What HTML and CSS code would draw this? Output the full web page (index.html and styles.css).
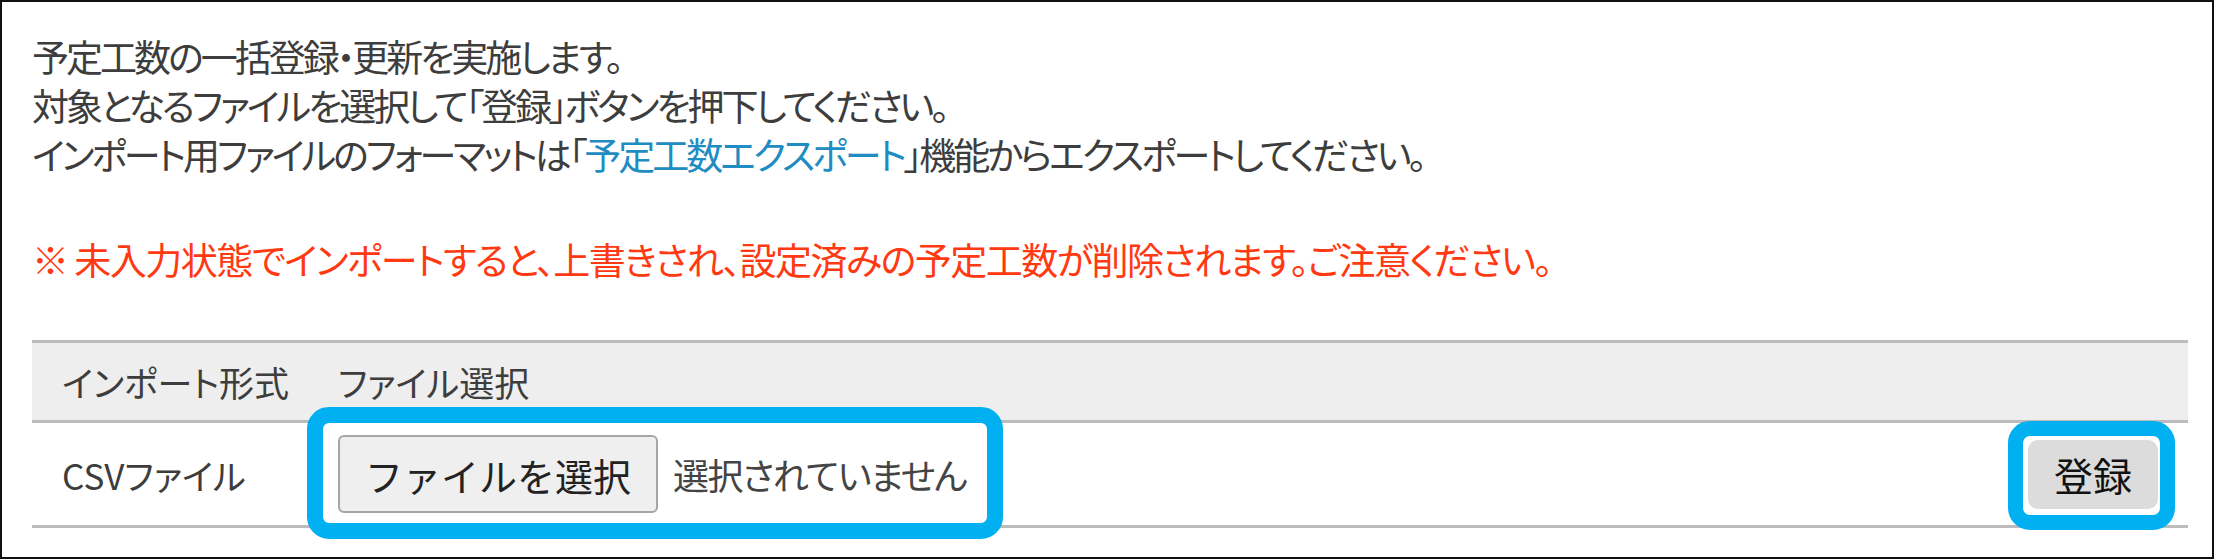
FILE: index.html
```html
<!DOCTYPE html>
<html lang="ja">
<head>
    <meta charset="UTF-8">
    <meta name="viewport" content="width=device-width, initial-scale=1.0">
    <title>予定工数インポート</title>
    <link rel="stylesheet" href="styles.css">
</head>
<body>
    <div class="page">
        <div class="intro">
            <p>予定工数の一括登録・更新を実施します。</p>
            <p>対象となるファイルを選択して「登録」ボタンを押下してください。</p>
            <p>インポート用ファイルのフォーマットは「<a href="#" class="link">予定工数エクスポート</a>」機能からエクスポートしてください。</p>
            <p class="warning">※ 未入力状態でインポートすると、上書きされ、設定済みの予定工数が削除されます。ご注意ください。</p>
        </div>

        <table class="import-table">
            <thead>
                <tr>
                    <th class="col-type">インポート形式</th>
                    <th>ファイル選択</th>
                    <th></th>
                </tr>
            </thead>
            <tbody>
                <tr>
                    <td class="col-type">CSVファイル</td>
                    <td>
                        <span class="file-field mark">
                            <button type="button" class="file-btn">ファイルを選択</button>
                            <span class="file-name">選択されていません</span>
                        </span>
                    </td>
                    <td class="col-action">
                        <span class="submit-wrap mark">
                            <button type="button" class="submit-btn">登録</button>
                        </span>
                    </td>
                </tr>
            </tbody>
        </table>
    </div>
</body>
</html>
```

FILE: styles.css
```css
body {
    margin: 0;
    background-color: #fff;
    font-family: "Noto Sans CJK JP", sans-serif;
    color: #3d3d3d;
}

.page {
    box-sizing: border-box;
    width: 2214px;
    height: 559px;
    border: 2px solid #111;
    padding: 30px 24px 0 30px;
}

.intro p {
    margin: 0;
    font-size: 37px;
    line-height: 49px;
    letter-spacing: -3px;
    font-feature-settings: "palt";
    white-space: nowrap;
}

.link {
    color: #1f8cc2;
    text-decoration: none;
}

.intro .warning {
    margin-top: 56px;
    letter-spacing: -1.5px;
    color: #ff3a12;
}

.import-table {
    width: 100%;
    margin-top: 56px;
    border-collapse: collapse;
    font-size: 35px;
    font-feature-settings: "palt";
}

.import-table th {
    height: 77px;
    padding: 0 0 0 30px;
    background-color: #eeeeee;
    border-top: 3px solid #bcbcbc;
    border-bottom: 3px solid #bcbcbc;
    font-weight: normal;
    text-align: left;
}

.import-table td {
    height: 102px;
    padding: 0 0 0 30px;
    border-bottom: 3px solid #bcbcbc;
    vertical-align: middle;
}

.import-table .col-type {
    width: 246px;
}

.import-table .col-action {
    text-align: right;
    padding-right: 30px;
}

.mark {
    position: relative;
}

/* blue highlight rings */
.mark::after {
    content: "";
    position: absolute;
    border: 16px solid #00b0f0;
    border-radius: 22px;
    pointer-events: none;
}

.file-field {
    display: inline-flex;
    align-items: center;
    gap: 15px;
    vertical-align: middle;
}

.file-field::after {
    inset: -28px -37px -26px -31px;
}

.file-btn {
    box-sizing: border-box;
    height: 78px;
    padding: 0 25px;
    background-color: #efefef;
    border: 2px solid #a6a6a6;
    border-radius: 6px;
    font-family: "Noto Sans CJK JP", sans-serif;
    font-size: 38px;
    color: #222;
}

.file-name {
    font-size: 36px;
    letter-spacing: -1.5px;
    color: #444;
}

.submit-wrap {
    display: inline-block;
    vertical-align: middle;
}

.submit-wrap::after {
    inset: -19px -17px -21px -20px;
    border-width: 15px;
}

.submit-btn {
    display: block;
    box-sizing: border-box;
    width: 130px;
    height: 69px;
    padding: 0;
    background-color: #dcdcdc;
    border: none;
    border-radius: 10px;
    font-family: "Noto Sans CJK JP", sans-serif;
    font-size: 39px;
    color: #111;
}
```
